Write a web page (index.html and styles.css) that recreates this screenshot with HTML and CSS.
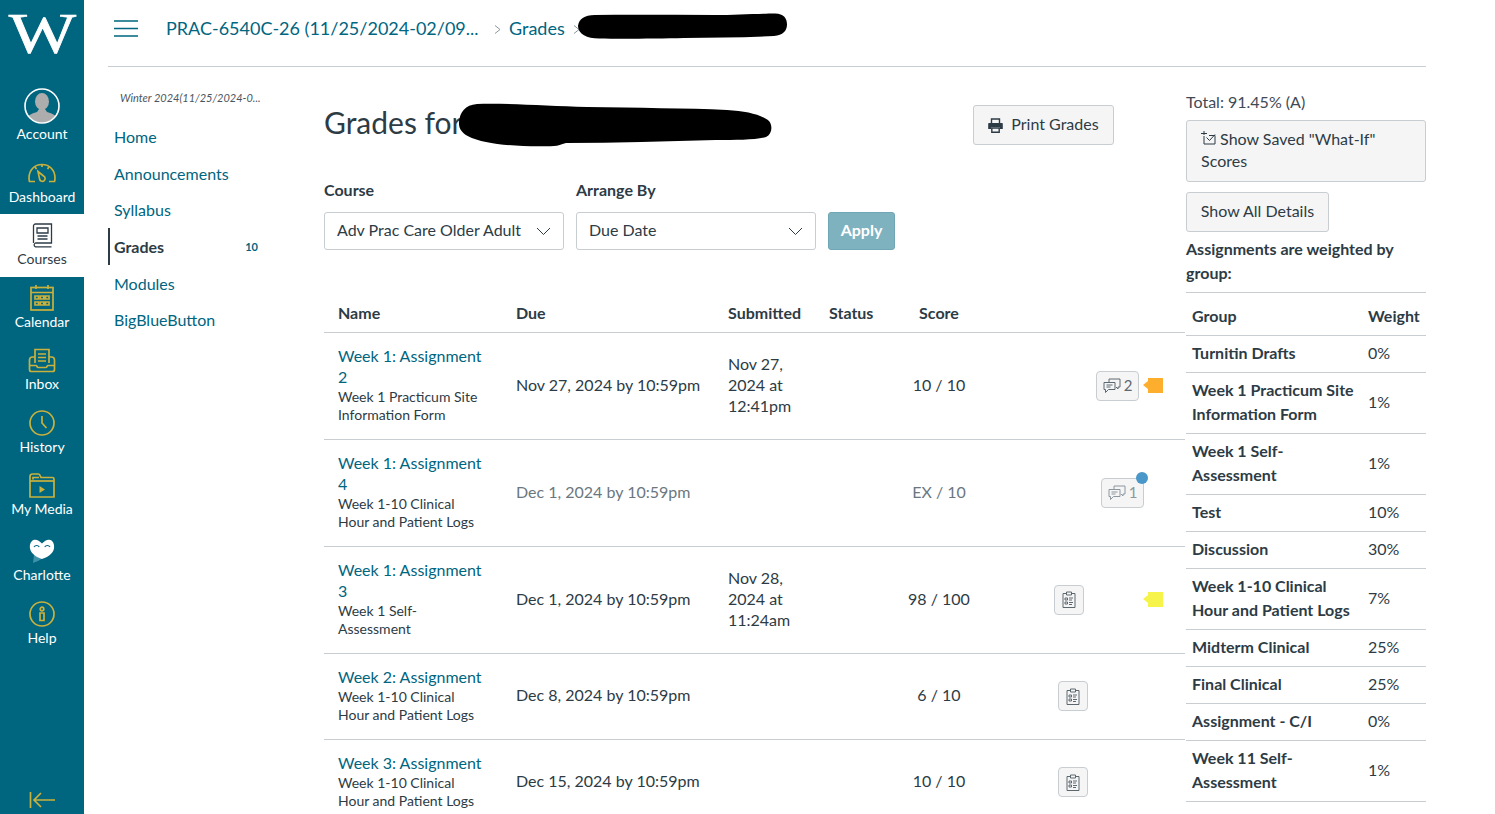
FILE: index.html
```html
<!DOCTYPE html>
<html lang="en">
<head>
<meta charset="utf-8">
<title>Grades</title>
<link rel="stylesheet" href="styles.css">
</head>
<body>
<div class="app">
  <nav class="gnav">
    <div class="logo"><span class="logo-w">W</span></div>
    <a class="gitem account"><span class="gicon">
      <svg width="36" height="36" viewBox="0 0 36 36"><defs><clipPath id="av"><circle cx="18" cy="18" r="16.500"/></clipPath></defs><g clip-path="url(#av)" fill="#adadad"><ellipse cx="18" cy="13.500" rx="7" ry="8.500"/><path d="M1 36c1-8 5-10 12-12l2-3h6l2 3c7 2 11 4 12 12z"/></g><circle cx="18" cy="18" r="17" fill="none" stroke="#fff" stroke-width="1.600"/></svg>
    </span><span>Account</span></a>
    <a class="gitem"><span class="gicon">
      <svg width="28" height="20" viewBox="0 0 28 20" class="gold"><path d="M7 18.500H1.500C1.200 17.500 1 16.500 1 15 1 7 6.500 1.500 14 1.500S27 7 27 15c0 1.500-.2 2.500-.5 3.500H21"/><path d="M10 8.500l5.500 4.500a2.800 2.800 0 1 1-3.800 3.600z"/><path d="M14 1.500v2.500M7 4l1.500 2M21 4l-1.500 2"/></svg>
    </span><span>Dashboard</span></a>
    <a class="gitem active"><span class="gicon">
      <svg width="21" height="25" viewBox="0 0 21 25" class="dark"><path d="M1.500 20V3a2 2 0 0 1 2-2h16v19H3.500a2 2 0 0 0 0 3.800h16"/><path d="M5 5h11v5H5zM5.500 13h10M5.500 16h10" /></svg>
    </span><span>Courses</span></a>
    <a class="gitem"><span class="gicon">
      <svg width="24" height="27" viewBox="0 0 24 27" class="gold"><rect x="1" y="3.500" width="22" height="22.500"/><path d="M1 8.500h22M6 1v4M18 1v4"/><path d="M5 12h3.500v3H5zM10.300 12h3.500v3h-3.500zM15.500 12H19v3h-3.500zM5 18h3.500v3H5zM10.300 18h3.500v3h-3.500zM15.500 18H19v3h-3.500z"/></svg>
    </span><span>Calendar</span></a>
    <a class="gitem"><span class="gicon">
      <svg width="28" height="25" viewBox="0 0 28 25" class="gold"><path d="M7 15V1.500h14V15"/><path d="M10 6h8M10 9.500h8M10 13h8"/><path d="M7 9H4.500C2.500 9 1.500 10 1.500 12v9.500c0 1 1 2 2 2h21c1 0 2-1 2-2V12c0-2-1-3-3-3H21"/><path d="M1.500 17.500H8c1 0 1 2 2 2h8c1 0 1-2 2-2h6.500"/></svg>
    </span><span>Inbox</span></a>
    <a class="gitem"><span class="gicon">
      <svg width="26" height="26" viewBox="0 0 26 26" class="gold"><circle cx="13" cy="13" r="12"/><path d="M13 6v7l4.500 5"/></svg>
    </span><span>History</span></a>
    <a class="gitem"><span class="gicon">
      <svg width="26" height="25" viewBox="0 0 26 25" class="gold"><path d="M1 24V3.500C1 2 2 1 3.500 1h6c1 0 1.500 1 2 2.500l.5 1h11.500c1 0 1.500.5 1.500 1.500v18z"/><path d="M4 6.500V4.500h6"/><path d="M1 8h24"/><path d="M10.500 13l5.500 3.500-5.500 3.500z" class="gold-fill"/></svg>
    </span><span>My Media</span></a>
    <a class="gitem charlotte"><span class="gicon">
      <svg width="28" height="26" viewBox="0 0 28 26"><path d="M6 17l-1 8c3-1 7-3 10-5z" fill="#3f93a9"/><path d="M14 5.500C11 2 8 1 5.500 2 2.500 3.300 1.500 7 2 10.500 3 16 9 19.500 14 21c5-1.500 11-5 12-10.500.5-3.500-.5-7.200-3.500-8.500C20 1 17 2 14 5.500z" fill="#fff"/><path d="M6 9c1.300-2 4-2 5.300 0M16.700 9c1.300-2 4-2 5.300 0" fill="none" stroke="#00657f" stroke-width="1.200"/></svg>
    </span><span>Charlotte</span></a>
    <a class="gitem"><span class="gicon">
      <svg width="26" height="26" viewBox="0 0 26 26" class="gold"><circle cx="13" cy="13" r="12"/><circle cx="13" cy="8" r="1.800"/><path d="M11 12h4v7.500h-4z"/></svg>
    </span><span>Help</span></a>
    <a class="collapse">
      <svg width="26" height="18" viewBox="0 0 26 18" class="gold"><path d="M1.500 1v16M26 9H5M12 2L5 9l7 7"/></svg>
    </a>
  </nav>

  <div class="main">
    <header class="topbar">
      <svg class="burger" width="24" height="17" viewBox="0 0 24 17"><path d="M0 1h24M0 8.500h24M0 16h24"/></svg>
      <a class="crumb crumb-course">PRAC-6540C-26 (11/25/2024-02/09...</a>
      <svg class="sep" width="7" height="9" viewBox="0 0 7 9"><path d="M1 .5l5 4-5 4"/></svg>
      <a class="crumb">Grades</a>
      <svg class="sep sep-last" width="7" height="9" viewBox="0 0 7 9"><path d="M1 .5l5 4-5 4"/></svg>
    </header>
    <div class="cols">
      <aside class="cnav">
        <div class="term">Winter 2024(11/25/2024-0...</div>
        <ul class="cnav-list">
          <li><a>Home</a></li>
          <li><a>Announcements</a></li>
          <li><a>Syllabus</a></li>
          <li class="current"><a>Grades</a><span class="badge">10</span></li>
          <li><a>Modules</a></li>
          <li><a>BigBlueButton</a></li>
        </ul>
      </aside>

      <section class="content">
        <div class="title-row">
          <h1>Grades for</h1>
          <button class="btn print">
            <svg width="15" height="15" viewBox="0 0 15 15"><path d="M3.500 5V1h8v4" fill="none" stroke="#2d3b45" stroke-width="1.400"/><path d="M1 5h13a.8.8 0 0 1 .8.8V11h-3V9h-8.600v2H.2V5.800A.8.8 0 0 1 1 5z" fill="#2d3b45"/><path d="M3.800 10h7.400v4.300H3.800z" fill="none" stroke="#2d3b45" stroke-width="1.400"/></svg>
            <span>Print Grades</span>
          </button>
        </div>
        <div class="filters">
          <div class="field course">
            <label>Course</label>
            <div class="select"><span>Adv Prac Care Older Adult</span><svg width="15" height="9" viewBox="0 0 15 9"><path d="M1 1l6.500 6.500L14 1"/></svg></div>
          </div>
          <div class="field arrange">
            <label>Arrange By</label>
            <div class="select"><span>Due Date</span><svg width="15" height="9" viewBox="0 0 15 9"><path d="M1 1l6.500 6.500L14 1"/></svg></div>
          </div>
          <button class="apply">Apply</button>
        </div>

        <table class="grades">
          <colgroup><col class="c-name"><col class="c-due"><col class="c-sub"><col class="c-status"><col class="c-score"><col class="c-tools"></colgroup>
          <thead>
            <tr><th>Name</th><th>Due</th><th>Submitted</th><th>Status</th><th class="center">Score</th><th></th></tr>
          </thead>
          <tbody>
            <tr>
              <td class="name"><a>Week 1: Assignment 2</a><small>Week 1 Practicum Site Information Form</small></td>
              <td>Nov 27, 2024 by 10:59pm</td>
              <td>Nov 27, 2024 at 12:41pm</td>
              <td></td>
              <td class="center">10 / 10</td>
              <td class="tools-cell"><div class="tools">
                <span class="chip cm t1"><svg width="18" height="16" viewBox="0 0 18 16"><use href="#cmt"/></svg>2</span>
                <span class="flag orange"></span>
              </div></td>
            </tr>
            <tr class="muted">
              <td class="name"><a>Week 1: Assignment 4</a><small>Week 1-10 Clinical Hour and Patient Logs</small></td>
              <td>Dec 1, 2024 by 10:59pm</td>
              <td></td>
              <td></td>
              <td class="center">EX / 10</td>
              <td class="tools-cell"><div class="tools">
                <span class="chip cm t2"><svg width="18" height="16" viewBox="0 0 18 16"><use href="#cmt"/></svg>1<i class="dot"></i></span>
              </div></td>
            </tr>
            <tr>
              <td class="name"><a>Week 1: Assignment 3</a><small>Week 1 Self-Assessment</small></td>
              <td>Dec 1, 2024 by 10:59pm</td>
              <td>Nov 28, 2024 at 11:24am</td>
              <td></td>
              <td class="center">98 / 100</td>
              <td class="tools-cell"><div class="tools">
                <span class="chip t3"><svg width="14" height="17" viewBox="0 0 14 17"><use href="#clip"/></svg></span>
                <span class="flag yellow"></span>
              </div></td>
            </tr>
            <tr>
              <td class="name"><a>Week 2: Assignment</a><small>Week 1-10 Clinical Hour and Patient Logs</small></td>
              <td>Dec 8, 2024 by 10:59pm</td>
              <td></td>
              <td></td>
              <td class="center">6 / 10</td>
              <td class="tools-cell"><div class="tools"><span class="chip t4"><svg width="14" height="17" viewBox="0 0 14 17"><use href="#clip"/></svg></span></div></td>
            </tr>
            <tr>
              <td class="name"><a>Week 3: Assignment</a><small>Week 1-10 Clinical Hour and Patient Logs</small></td>
              <td>Dec 15, 2024 by 10:59pm</td>
              <td></td>
              <td></td>
              <td class="center">10 / 10</td>
              <td class="tools-cell"><div class="tools"><span class="chip t4"><svg width="14" height="17" viewBox="0 0 14 17"><use href="#clip"/></svg></span></div></td>
            </tr>
          </tbody>
        </table>
      </section>

      <aside class="side">
        <div class="total">Total: 91.45% (A)</div>
        <button class="btn wide">
          <svg width="15" height="14" viewBox="0 0 15 14"><path d="M3 0v4M0 2.500h6M3 5v8h11V4.500H8M5.500 6.500l3 3 5.500-6" fill="none" stroke="#2d3b45" stroke-width="1"/></svg>
          Show Saved "What-If" Scores
        </button>
        <button class="btn details">Show All Details</button>
        <p class="weighted">Assignments are weighted by group:</p>
        <table class="weights">
          <thead><tr><th>Group</th><th>Weight</th></tr></thead>
          <tbody>
            <tr><th>Turnitin Drafts</th><td>0%</td></tr>
            <tr><th>Week 1 Practicum Site Information Form</th><td>1%</td></tr>
            <tr><th>Week 1 Self-Assessment</th><td>1%</td></tr>
            <tr><th>Test</th><td>10%</td></tr>
            <tr><th>Discussion</th><td>30%</td></tr>
            <tr><th>Week 1-10 Clinical Hour and Patient Logs</th><td>7%</td></tr>
            <tr><th>Midterm Clinical</th><td>25%</td></tr>
            <tr><th>Final Clinical</th><td>25%</td></tr>
            <tr><th>Assignment - C/I</th><td>0%</td></tr>
            <tr><th>Week 11 Self-Assessment</th><td>1%</td></tr>
            <tr><th>Total</th><td>100%</td></tr>
          </tbody>
        </table>
      </aside>
    </div>
  </div>
</div>

<svg class="blot blot-top" width="212" height="28" viewBox="0 0 212 28"><path d="M1 13C2 6 7 2 18 2c40-.5 80 0 120 0 20 0 45-1.500 60-1.500 9 0 12 5 12 11s-4 11-13 11.500c-30 1.500-60 1.500-90 2-25 .5-60 1-85 .5C10 25.500 1 21 1 13z" fill="#000"/></svg>
<svg class="blot blot-title" width="320" height="44" viewBox="0 0 320 44"><path d="M2 19C3 9 8 2 20 1c30-1 70 2 110 3 50 1 100 1 140 3 20 1 35 5 42 11 4 5 3 13-3 16-10 3-30 3-50 3-50 1-100 3-150 3-5 1-8 3-12 3-20 1-50 0-68-4C16 36 1 32 2 19z" fill="#000"/></svg>

<svg class="defs" width="0" height="0">
  <symbol id="cmt" viewBox="0 0 18 16"><path d="M6 4.500V1h11v8h-2v2l-2-2M1 4.500h11v7H5.500L2.500 14.500v-3H1zM3.500 7h6M3.500 9h4" fill="none" stroke="currentColor" stroke-width="1"/></symbol>
  <symbol id="clip" viewBox="0 0 14 17"><path d="M4.500 2.500H1v14h12v-14H9.500M4.500 1h5v3h-5z" fill="none" stroke="currentColor" stroke-width="1"/><path d="M3 7h2.500v2H3zM3 11h2.500v2H3zM7 7h4M7 9h3M7 11.500h4M7 13.500h3" fill="none" stroke="currentColor" stroke-width="1"/></symbol>
</svg>
</body>
</html>
```
FILE: styles.css
```css
* { box-sizing: border-box; }
html, body { margin: 0; height: 814px; overflow: hidden; background: #fff; }
body { font-family: Lato, "Noto Sans", sans-serif; font-size: 16px; color: #2d3b45; position: relative; }
a { color: #00657f; text-decoration: none; }
button { font-family: inherit; }

.app { display: flex; height: 814px; }

/* global nav */
.gnav { width: 84px; flex: none; background: #00657f; display: flex; flex-direction: column; height: 814px; color: #fff; }
.logo { height: 77.75px; flex: none; display: flex; justify-content: center; overflow: hidden; }
.logo-w { font-family: "Liberation Serif", serif; font-weight: 400; font-size: 58px; line-height: 68px; color: #fff; transform: scaleX(1.23); -webkit-text-stroke: 0.7px #fff; }
.gitem { display: flex; flex-direction: column; align-items: center; flex: none; height: 62.5px; padding-top: 6px; color: #fff; font-size: 14px; line-height: 18px; }
.gicon { height: 30px; display: flex; align-items: center; justify-content: center; }
.gitem.account { height: 74px; padding-top: 9px; }
.gitem.account .gicon { height: 38px; }
.gitem.active { background: #fff; color: #2d3b45; }
.gitem.charlotte { margin-top: 3.300px; }
.gold { fill: none; stroke: #c9b13d; stroke-width: 1.700; }
.gold .gold-fill { fill: #c9b13d; stroke: none; }
.dark { fill: none; stroke: #2d3b45; stroke-width: 1.300; }
.collapse { margin-top: auto; display: flex; justify-content: center; padding-bottom: 5px; }

/* main */
.main { margin-left: 24px; width: 1318px; flex: none; display: flex; flex-direction: column; min-height: 0; }
.topbar { height: 67px; border-bottom: 1px solid #c7cdd1; display: flex; align-items: center; padding: 0 0 10px 6px; font-size: 18px; }
.burger { fill: none; stroke: #00657f; stroke-width: 1.700; margin-right: 28px; }
.crumb-course { width: 315px; white-space: nowrap; }
.sep { fill: none; stroke: #8b969e; stroke-width: 1; margin: 2px 8px 0 13px; flex: none; }
.sep-last { margin-left: 8px; }
.crumb { flex: none; }
.cols { display: flex; flex: 1; min-height: 0; }

/* course nav */
.cnav { width: 216px; flex: none; }
.term { padding: 22px 0 0 12px; font-size: 11px; font-style: italic; line-height: 18px; color: #4a555d; height: 40px; }
.cnav-list { list-style: none; margin: 11.500px 0 0; padding: 0; }
.cnav-list li { height: 36.6px; display: flex; align-items: center; padding-left: 6px; position: relative; width: 152px; }
.cnav-list .current { border-left: 2px solid #2d3b45; padding-left: 4px; }
.cnav-list .current a { color: #2d3b45; font-weight: 700; }
.badge { margin-left: auto; font-size: 11px; font-weight: 700; color: #00657f; padding-right: 2px; }

/* content */
.content { width: 862px; flex: none; padding-top: 37px; }
.title-row { display: flex; justify-content: space-between; align-items: flex-start; padding-right: 72px; height: 76px; }
h1 { font-weight: 400; font-size: 30px; line-height: 36px; margin: 0; color: #2d3b45; }
.btn { background: #f5f5f5; border: 1px solid #c7cdd1; border-radius: 3px; color: #2d3b45; font-size: 16px; line-height: 22px; padding: 0 0 2px; }
.print { height: 40px; width: 141px; margin-top: 1px; display: flex; align-items: center; justify-content: center; gap: 8px; }
.print svg { margin-top: 2px; }
.filters { display: flex; align-items: flex-end; gap: 12px; }
.field label { display: block; font-weight: 700; line-height: 20px; margin-bottom: 12px; }
.select { width: 240px; height: 38px; border: 1px solid #c7cdd1; border-radius: 3px; display: flex; align-items: center; justify-content: space-between; padding: 0 12px; }
.select span { margin-top: -4px; }
.select svg { fill: none; stroke: #2d3b45; stroke-width: 1; }
.apply { width: 67px; height: 38px; border: 1px solid #6ea6b5; border-radius: 3px; background: #7fb2bf; color: #fff; font-size: 16px; font-weight: 700; padding: 0 0 4px; }

/* grades table */
.grades { width: 861px; table-layout: fixed; border-collapse: collapse; margin-top: 45px; line-height: 21px; }
.c-name { width: 192px; } .c-due { width: 212px; } .c-sub { width: 101px; } .c-status { width: 70px; } .c-score { width: 80px; } .c-tools { width: 206px; }
.grades th { text-align: left; font-weight: 700; height: 37px; padding: 0 0 1px 0; vertical-align: middle; border-bottom: 1px solid #c7cdd1; }
.grades th:first-child { padding-left: 14px; }
.grades td { vertical-align: middle; padding: 0 0 3px; border-bottom: 1px solid #c7cdd1; }
.grades td:nth-child(3) { padding-right: 12px; }
.grades .center { text-align: center; }
.grades td.tools-cell { padding-bottom: 0; }
.grades td.name { padding: 13px 32px 15px 14px; }
.name a { display: block; margin: -1px 0 1px; }
.name small { display: block; font-size: 14px; line-height: 18px; }
.muted td:nth-child(2), .muted td:nth-child(5) { color: #6b7780; }
.tools { display: flex; align-items: center; padding-right: 22px; }
.chip { position: relative; display: inline-flex; align-items: center; justify-content: center; gap: 3px; height: 30px; background: #f5f5f5; border: 1px solid #c7cdd1; border-radius: 4px; color: #5c6870; font-size: 15px; width: 30px; }
.chip.cm { width: 43px; }
.t1 { margin-left: 117px; }
.t2 { margin-left: 122px; width: 42px; color: #8b969e; }
.t3 { margin-left: 75px; }
.t4 { margin-left: 79px; }
.dot { position: absolute; top: -7px; right: -5px; width: 12px; height: 12px; border-radius: 50%; background: #4a97c9; }
.flag { margin-left: auto; width: 20px; height: 15px; position: relative; }
.flag::before { content: ""; position: absolute; left: 5px; top: 0; width: 15px; height: 15px; }
.flag::after { content: ""; position: absolute; left: 0; top: 3px; border: 4.500px solid transparent; border-left-width: 0; border-right-width: 5px; }
.orange::before { background: #fdae2d; } .orange::after { border-right-color: #fdae2d; }
.yellow::before { background: #f6f34a; } .yellow::after { border-right-color: #f6f34a; }

/* right side */
.side { width: 240px; flex: none; padding-top: 25px; }
.total { line-height: 20px; margin-bottom: 8px; color: #3f4b54; }
.wide { display: block; width: 240px; height: 62px; text-align: left; padding: 0 14px 2px; line-height: 22px; margin-bottom: 10px; }
.details { display: block; width: 143px; height: 40px; }
.weighted { margin: 5px 0 7px; font-weight: 700; line-height: 24px; }
.weights { width: 240px; table-layout: fixed; border-collapse: collapse; line-height: 24px; border-top: 1px solid #c7cdd1; }
.weights th, .weights td { text-align: left; padding: 5px 6px 7px; border-bottom: 1px solid #c7cdd1; }
.weights th:first-child { width: 176px; font-weight: 700; }
.weights thead th { padding: 11px 6px 7px; }

/* redaction marks */
.blot { position: absolute; }
.blot-top { left: 577px; top: 13px; }
.blot-title { left: 457px; top: 103px; }
.defs { position: absolute; }
```
